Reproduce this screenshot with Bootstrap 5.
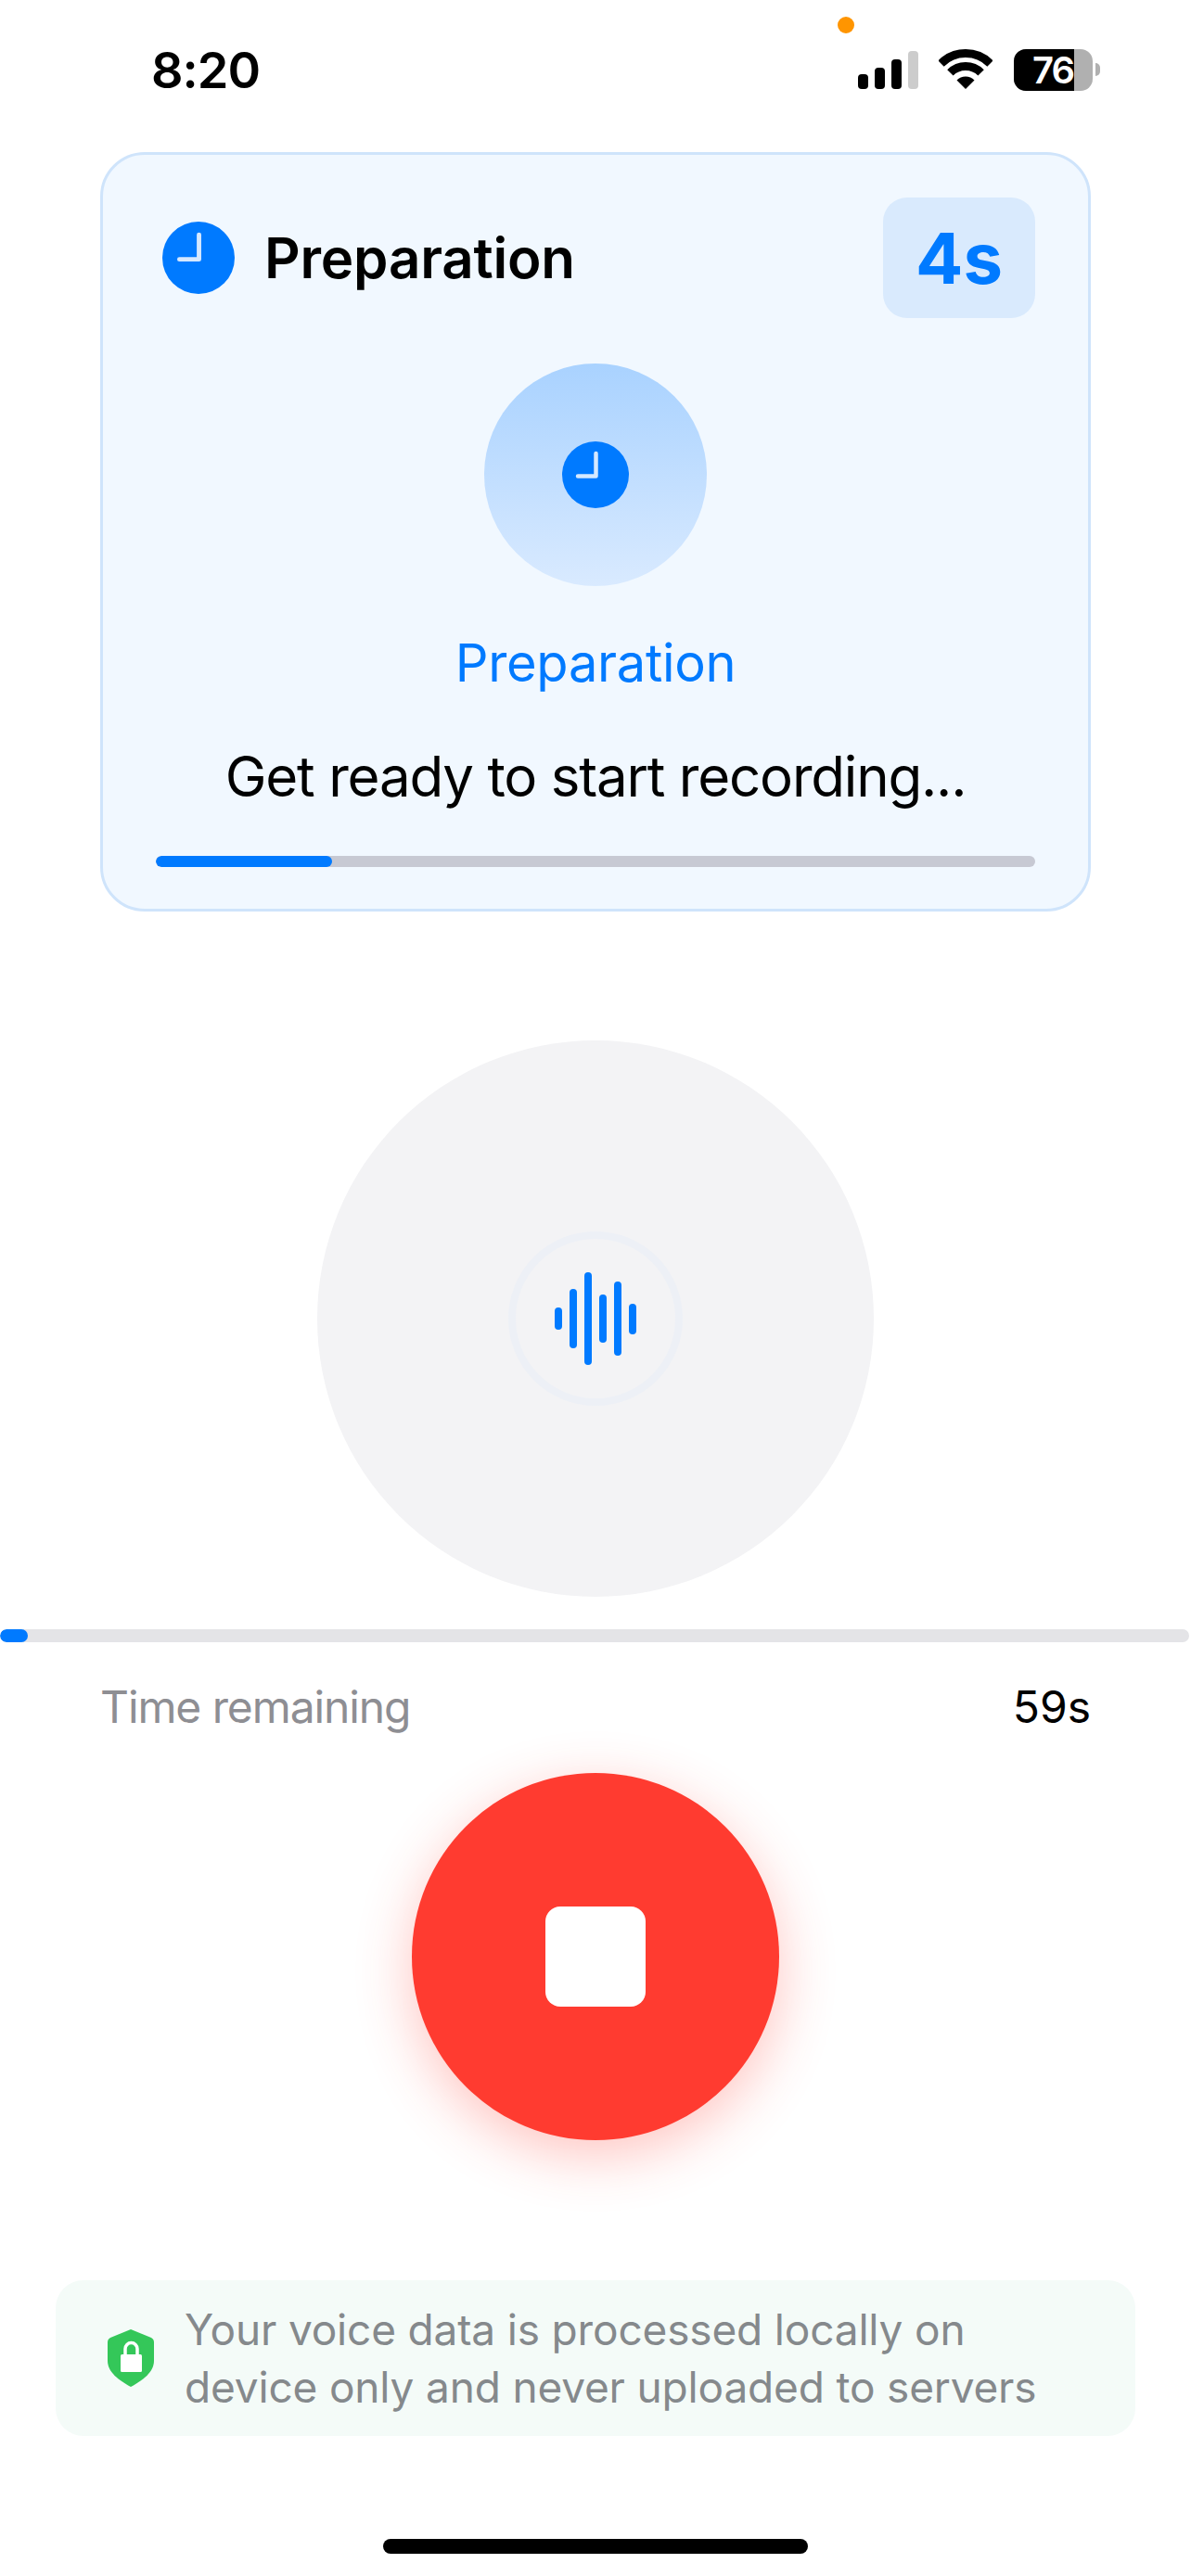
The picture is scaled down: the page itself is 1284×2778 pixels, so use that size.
<!DOCTYPE html>
<html lang="en">
<head>
  <meta charset="UTF-8">
  <meta name="viewport" content="width=device-width, initial-scale=1">
  <title>Voice recording</title>
  <link href="https://cdn.jsdelivr.net/npm/bootstrap@5.3.0/dist/css/bootstrap.min.css" rel="stylesheet">
  <style>
    body { background: #fff; color: #000; font-family: "Inter", "Liberation Sans", sans-serif; }
    .screen { width: 1284px; height: 2778px; position: relative; overflow: hidden; }
    .privacy-dot { position: absolute; left: 903px; top: 18px; width: 18px; height: 18px; border-radius: 50%; background: #ff9500; }
    .status-row { height: 164px; padding: 53px 98px 0 163px; }
    .status-time { font-size: 54px; font-weight: 600; line-height: 46px; letter-spacing: -1px; }
    .signal { gap: 7px; height: 41px; margin-top: 2px; }
    .signal i { display: block; width: 11px; border-radius: 4px; background: #000; }
    .signal i:nth-child(1) { height: 16px; }
    .signal i:nth-child(2) { height: 23px; }
    .signal i:nth-child(3) { height: 32px; }
    .signal i:nth-child(4) { height: 41px; background: #ccc; }
    .wifi { width: 58px; height: 43px; margin: 0 23px 0 22px; }
    .battery { width: 85px; height: 45px; border-radius: 13px; background: #b0b0b0; }
    .battery-fill { width: 65px; height: 45px; padding-right: 1px; border-radius: 13px 0 0 13px; background: #000; color: #fff; font-size: 40px; font-weight: 600; line-height: 45px; text-align: right; letter-spacing: -2px; }
    .battery-nub { width: 5px; height: 14px; margin: 15px 0 0 3px; border-radius: 0 7px 7px 0; background: #b0b0b0; }
    .prep-box { width: 1068px; height: 819px; margin: 0 0 0 108px; padding: 46px 57px; border: 3px solid #cfe4fb; border-radius: 48px; background: #f1f8ff; }
    .prep-head { margin: 0 0 0 7px; height: 130px; }
    .prep-title { font-size: 60px; font-weight: 600; margin-left: 32px; letter-spacing: -.2px; }
    .prep-count { width: 164px; height: 130px; border-radius: 26px; background: #d9eafd; color: #007aff; font-size: 76px; font-weight: 700; }
    .prep-orb { width: 240px; height: 240px; margin: 49px auto 0; border-radius: 50%; background: linear-gradient(180deg, #a9d2ff, #d9eaff); }
    .prep-name { color: #007aff; font-size: 56px; line-height: 68px; margin-top: 49px; letter-spacing: -.3px; }
    .prep-msg { font-size: 60px; line-height: 72px; margin-top: 52px; letter-spacing: -1.2px; }
    .prep-track { height: 12px; margin-top: 50px; border-radius: 6px; background: #c7c9d3; overflow: hidden; }
    .prep-fill { height: 12px; border-radius: 6px; background: #007aff; }
    .mic-disc { width: 600px; height: 600px; margin: 139px auto 0; border-radius: 50%; background: #f3f3f5; }
    .mic-ring { width: 188px; height: 188px; border: 8px solid #edf0f6; border-radius: 50%; gap: 8px; }
    .mic-ring i { display: block; width: 8px; border-radius: 4px; background: #007aff; }
    .time-track { width: 1282px; height: 14px; margin-top: 35px; border-radius: 7px; background: #e4e4e7; overflow: hidden; }
    .time-fill { height: 14px; border-radius: 7px; background: #007aff; }
    .time-row { padding: 0 108px; margin-top: 41px; font-size: 48px; line-height: 58px; height: 100px; }
    .time-label { color: #8e8e93; letter-spacing: -1.1px; }
    .stop-btn { width: 396px; height: 396px; margin: 0 auto; border-radius: 50%; background: #ff3b30; box-shadow: 0 16px 60px rgba(255, 59, 48, .3); }
    .stop-btn span { display: block; width: 108px; height: 108px; border-radius: 16px; background: #fff; }
    .safe-note { width: 1164px; height: 168px; margin: 151px 0 0 60px; padding-left: 56px; border-radius: 30px; background: #f4fbf8; }
    .safe-note p { margin: 0 0 0 33px; color: #85898c; font-size: 46px; line-height: 62px; letter-spacing: -.17px; }
    .home-bar { width: 458px; height: 16px; margin: 111px auto 0; border-radius: 8px; background: #000; }
  </style>
</head>
<body>
  <svg width="0" height="0" class="d-block position-absolute">
    <symbol id="clock" viewBox="0 0 72 72">
      <circle cx="36" cy="36" r="36" fill="#007aff"/>
      <path d="M36.5 13V37.5H17" fill="none" stroke="#d5e8ff" stroke-width="4.5" stroke-linecap="round" stroke-linejoin="round"/>
    </symbol>
  </svg>

  <div class="screen">
    <div class="privacy-dot"></div>

    <div class="status-row d-flex justify-content-between align-items-start">
      <div class="status-time">8:20</div>
      <div class="d-flex align-items-start">
        <div class="signal d-flex align-items-end"><i></i><i></i><i></i><i></i></div>
        <svg class="wifi d-block" viewBox="0 0 58 43">
          <g fill="none" stroke="#000" stroke-width="9">
            <path d="M2.5 15.5A37.5 37.5 0 0 1 55.5 15.5"/>
            <path d="M12.4 25.4A23.5 23.5 0 0 1 45.6 25.4"/>
          </g>
          <path d="M29 43L19.5 33.5A13.4 13.4 0 0 1 38.5 33.5Z" fill="#000"/>
        </svg>
        <div class="battery"><div class="battery-fill">76</div></div>
        <div class="battery-nub"></div>
      </div>
    </div>

    <div class="prep-box">
      <div class="prep-head d-flex justify-content-between align-items-center">
        <div class="d-flex align-items-center">
          <svg width="78" height="78"><use href="#clock"/></svg>
          <div class="prep-title">Preparation</div>
        </div>
        <div class="prep-count d-flex align-items-center justify-content-center">4s</div>
      </div>
      <div class="prep-orb d-flex align-items-center justify-content-center">
        <svg width="72" height="72"><use href="#clock"/></svg>
      </div>
      <div class="prep-name text-center">Preparation</div>
      <div class="prep-msg text-center">Get ready to start recording...</div>
      <div class="prep-track"><div class="prep-fill" style="width: 20%"></div></div>
    </div>

    <div class="mic-disc d-flex align-items-center justify-content-center">
      <div class="mic-ring d-flex align-items-center justify-content-center">
        <i style="height: 24px"></i>
        <i style="height: 64px"></i>
        <i style="height: 100px"></i>
        <i style="height: 52px"></i>
        <i style="height: 80px"></i>
        <i style="height: 33px"></i>
      </div>
    </div>

    <div class="time-track"><div class="time-fill" style="width: 30px"></div></div>
    <div class="time-row d-flex justify-content-between">
      <span class="time-label">Time remaining</span>
      <span>59s</span>
    </div>

    <div class="stop-btn d-flex align-items-center justify-content-center"><span></span></div>

    <div class="safe-note d-flex align-items-center">
      <svg width="50" height="62" viewBox="0 0 50 62" class="flex-shrink-0">
        <path d="M25 0L47 9Q50 10.500 50 14V34C50 46 38 55 25 62C12 55 0 46 0 34V14Q0 10.500 3 9Z" fill="#34c759"/>
        <path d="M19 28V21A6.500 6.500 0 0 1 32 21V28" fill="none" stroke="#fff" stroke-width="3.500"/>
        <rect x="14" y="27" width="23" height="19" rx="1.500" fill="#fff"/>
      </svg>
      <p>Your voice data is processed locally on<br>device only and never uploaded to servers</p>
    </div>

    <div class="home-bar"></div>
  </div>

  <script src="https://cdn.jsdelivr.net/npm/bootstrap@5.3.0/dist/js/bootstrap.bundle.min.js"></script>
</body>
</html>
